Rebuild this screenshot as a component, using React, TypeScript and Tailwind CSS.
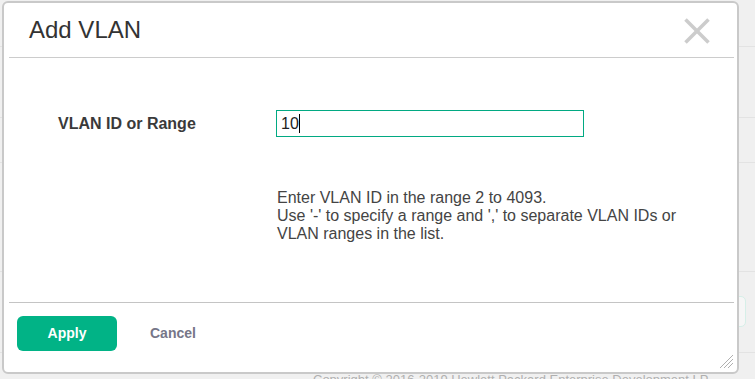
import React from "react";

export default function App() {
  return (
    <div
      className="relative w-[755px] h-[379px] overflow-hidden bg-[#f0f0f0]"
      style={{ fontFamily: '"Liberation Sans", Arial, sans-serif' }}
    >
      {/* background page */}
      <div className="absolute inset-0">
        <div className="absolute left-0 right-0 top-[46px] h-px bg-[#e3e3e3]" />
        <div className="absolute left-0 right-0 top-[117px] h-px bg-[#e3e3e3]" />
        <div className="absolute left-0 right-0 top-[162px] h-px bg-[#e3e3e3]" />
        <div className="absolute left-0 right-0 top-[271px] h-px bg-[#e3e3e3]" />
        <div className="absolute left-0 right-0 top-[352px] h-px bg-[#e3e3e3]" />
        <div className="absolute left-[700px] top-[296px] w-[46px] h-[31px] rounded-[5px] border border-[#d6efe8] bg-[#f6f6f6]" />
        <div className="absolute left-[313px] top-[372px] text-[13px] leading-[16px] text-[#b0b0b0] whitespace-nowrap">
          Copyright © 2016-2019 Hewlett Packard Enterprise Development LP
        </div>
      </div>

      {/* dialog */}
      <div className="absolute left-[2px] top-[1px] w-[737px] h-[373px] bg-white border-2 border-[#c9c9c9] rounded-[6px] flex flex-col">
        <div className="h-[54px] flex items-center justify-between pl-[25px] pr-[27px]">
          <div className="text-[24px] leading-[28px] text-[#333333]">Add VLAN</div>
          <svg width="26" height="26" viewBox="0 0 26 26" className="mt-[1px]">
            <line x1="1.5" y1="1.5" x2="24.5" y2="24.5" stroke="#cccccc" strokeWidth="3.5" />
            <line x1="24.5" y1="1.5" x2="1.5" y2="24.5" stroke="#cccccc" strokeWidth="3.5" />
          </svg>
        </div>
        <div className="ml-[5px] mr-[3px] h-px bg-[#cccccc]" />

        <div className="flex-1 flex flex-col">
          <div className="mt-[52px] flex items-center h-[27px]">
            <div className="w-[272px] pl-[54px] text-[16px] font-bold text-[#3a3a3a]">
              VLAN ID or Range
            </div>
            <div className="w-[308px] h-[27px] border border-[#01a982] flex items-center pl-[4px] text-[16px] text-[#222]">
              <span>10</span>
              <span className="inline-block w-px h-[19px] bg-black" />
            </div>
          </div>
          <div className="mt-[52px] ml-[273px] text-[16px] leading-[18px] text-[#444444]">
            <div>Enter VLAN ID in the range 2 to 4093.</div>
            <div>Use '-' to specify a range and ',' to separate VLAN IDs or</div>
            <div>VLAN ranges in the list.</div>
          </div>
        </div>

        <div className="ml-[5px] mr-[3px] h-px bg-[#c4c4c4]" />
        <div className="h-[69px] flex items-start pt-[13px] pl-[13px]">
          <button className="w-[100px] h-[35px] rounded-[6px] bg-[#01b386] text-white text-[14px] font-bold">
            Apply
          </button>
          <button className="ml-[33px] h-[35px] text-[14px] font-bold text-[#767688]">
            Cancel
          </button>
        </div>

        <svg width="16" height="16" viewBox="0 0 16 16" className="absolute right-[3px] bottom-[3px]">
          <line x1="15" y1="2" x2="2" y2="15" stroke="#b0b0b0" strokeWidth="1" />
          <line x1="15" y1="6" x2="6" y2="15" stroke="#b0b0b0" strokeWidth="1" />
          <line x1="15" y1="10" x2="10" y2="15" stroke="#b0b0b0" strokeWidth="1" />
        </svg>
      </div>
    </div>
  );
}
